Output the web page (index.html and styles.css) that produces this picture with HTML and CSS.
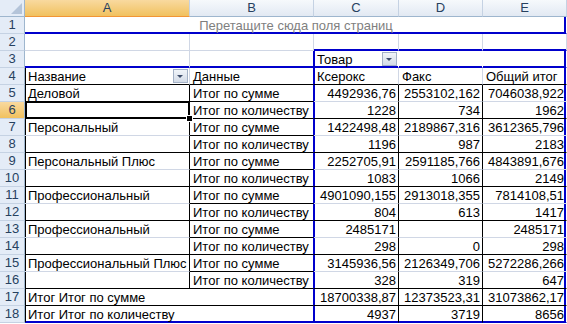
FILE: index.html
```html
<!DOCTYPE html>
<html>
<head>
<meta charset="utf-8">
<link rel="stylesheet" href="styles.css">
</head>
<body>
<div class="sheet">
  <div class="corner"><span class="tri"></span></div>
  <div class="ch sel">A</div>
  <div class="ch">B</div>
  <div class="ch">C</div>
  <div class="ch">D</div>
  <div class="ch">E</div>

  <div class="rh">1</div>
  <div class="c page bB re">Перетащите сюда поля страниц</div>

  <div class="rh">2</div>
  <div class="c"></div><div class="c"></div><div class="c bB"></div><div class="c bB"></div><div class="c bB"></div>

  <div class="rh">3</div>
  <div class="c bB"></div>
  <div class="c bB rb"></div>
  <div class="c bB lb nr fld">Товар<span class="dd"></span></div>
  <div class="c bB nr"></div>
  <div class="c bB re"></div>

  <div class="rh">4</div>
  <div class="c kb lk fld">Название<span class="dd"></span></div>
  <div class="c kb rb">Данные</div>
  <div class="c kb lb">Ксерокс</div>
  <div class="c kb">Факс</div>
  <div class="c kb re">Общий итог</div>

  <div class="rh">5</div>
  <div class="c kr lk">Деловой</div>
  <div class="c kb rb">Итог по сумме</div>
  <div class="c n lb kr">4492936,76</div>
  <div class="c n kr">2553102,162</div>
  <div class="c n re">7046038,922</div>

  <div class="rh sel">6</div>
  <div class="c kb kr lk active"><span class="handle"></span></div>
  <div class="c kb rb">Итог по количеству</div>
  <div class="c n lb kr kb">1228</div>
  <div class="c n kr kb">734</div>
  <div class="c n re kb">1962</div>

  <div class="rh">7</div>
  <div class="c kr lk">Персональный</div>
  <div class="c kb rb">Итог по сумме</div>
  <div class="c n lb kr">1422498,48</div>
  <div class="c n kr">2189867,316</div>
  <div class="c n re">3612365,796</div>

  <div class="rh">8</div>
  <div class="c kb kr lk"></div>
  <div class="c kb rb">Итог по количеству</div>
  <div class="c n lb kr kb">1196</div>
  <div class="c n kr kb">987</div>
  <div class="c n re kb">2183</div>

  <div class="rh">9</div>
  <div class="c kr lk">Персональный Плюс</div>
  <div class="c kb rb">Итог по сумме</div>
  <div class="c n lb kr">2252705,91</div>
  <div class="c n kr">2591185,766</div>
  <div class="c n re">4843891,676</div>

  <div class="rh">10</div>
  <div class="c kb kr lk"></div>
  <div class="c kb rb">Итог по количеству</div>
  <div class="c n lb kr kb">1083</div>
  <div class="c n kr kb">1066</div>
  <div class="c n re kb">2149</div>

  <div class="rh">11</div>
  <div class="c kr lk">Профессиональный</div>
  <div class="c kb rb">Итог по сумме</div>
  <div class="c n lb kr">4901090,155</div>
  <div class="c n kr">2913018,355</div>
  <div class="c n re">7814108,51</div>

  <div class="rh">12</div>
  <div class="c kb kr lk"></div>
  <div class="c kb rb">Итог по количеству</div>
  <div class="c n lb kr kb">804</div>
  <div class="c n kr kb">613</div>
  <div class="c n re kb">1417</div>

  <div class="rh">13</div>
  <div class="c kr lk">Профессиональный</div>
  <div class="c kb rb">Итог по сумме</div>
  <div class="c n lb kr">2485171</div>
  <div class="c n kr"></div>
  <div class="c n re">2485171</div>

  <div class="rh">14</div>
  <div class="c kb kr lk"></div>
  <div class="c kb rb">Итог по количеству</div>
  <div class="c n lb kr kb">298</div>
  <div class="c n kr kb">0</div>
  <div class="c n re kb">298</div>

  <div class="rh">15</div>
  <div class="c kr lk">Профессиональный Плюс</div>
  <div class="c kb rb">Итог по сумме</div>
  <div class="c n lb kr">3145936,56</div>
  <div class="c n kr">2126349,706</div>
  <div class="c n re">5272286,266</div>

  <div class="rh">16</div>
  <div class="c kb kr lk"></div>
  <div class="c kb rb">Итог по количеству</div>
  <div class="c n lb kr kb">328</div>
  <div class="c n kr kb">319</div>
  <div class="c n re kb">647</div>

  <div class="rh">17</div>
  <div class="c span2 kb rb lk">Итог Итог по сумме</div>
  <div class="c n lb kr kb">18700338,87</div>
  <div class="c n kr kb">12373523,31</div>
  <div class="c n re kb">31073862,17</div>

  <div class="rh">18</div>
  <div class="c span2 bB rb lk">Итог Итог по количеству</div>
  <div class="c n lb kr bB">4937</div>
  <div class="c n kr bB">3719</div>
  <div class="c n re bB">8656</div>
</div>
</body>
</html>
```

FILE: styles.css
```css
html, body {
  margin: 0;
  padding: 0;
  background: #ffffff;
}
.sheet {
  display: grid;
  grid-template-columns: 25px 165px 124px 85px 84px 84px;
  grid-auto-rows: 17px;
  width: 567px;
  font-family: "Liberation Sans", Arial, sans-serif;
  font-size: 13px;
  color: #000;
}
.corner {
  background: #e4ecf7;
  border-right: 1px solid #9eb6ce;
  border-bottom: 1px solid #9eb6ce;
  box-sizing: border-box;
  position: relative;
}
.tri {
  position: absolute;
  right: 2px;
  bottom: 2px;
  width: 0;
  height: 0;
  border-left: 11px solid transparent;
  border-bottom: 11px solid #b4c4d9;
}
.ch {
  background: linear-gradient(#f6f9fc, #e2e9f3);
  border-right: 1px solid #c5d2e3;
  border-bottom: 1px solid #9eb6ce;
  box-sizing: border-box;
  text-align: center;
  line-height: 16px;
  font-size: 13px;
  color: #27415f;
}
.ch.sel {
  background: linear-gradient(#f9d99f, #f1c15f);
  border-bottom-color: #f29536;
}
.rh {
  background: #e4ecf7;
  border-right: 1px solid #9eb6ce;
  border-bottom: 1px solid #c5d2e3;
  box-sizing: border-box;
  text-align: center;
  line-height: 16px;
  font-size: 13px;
  color: #27415f;
}
.rh.sel {
  background: linear-gradient(#f9d99f, #f1c15f);
}
.c {
  --sl: 0 0 0 transparent;
  --sr: 0 0 0 transparent;
  --sb: 0 0 0 transparent;
  border-right: 1px solid #d0d7e5;
  border-bottom: 1px solid #d0d7e5;
  box-shadow: var(--sl), var(--sr), var(--sb);
  box-sizing: border-box;
  line-height: 16px;
  padding: 1px 2px 0 3px;
  white-space: nowrap;
  position: relative;
}
.n { text-align: right; }
.page {
  grid-column: span 5;
  text-align: center;
  color: #7f7f7f;
}
.span2 { grid-column: span 2; }
.kb { border-bottom-color: #000; }
.kr { border-right-color: #000; }
.nr { border-right-color: transparent; }
.lk { --sl: inset 1px 0 0 #000; }
.lb { --sl: inset 1px 0 0 #0000cc; }
.rb { border-right-color: #0000cc; }
.re { border-right-color: transparent; --sr: inset -2px 0 0 #0000cc; }
.bB { border-bottom-color: #0000cc; --sb: inset 0 -1px 0 #0000cc; }
.fld .dd {
  position: absolute;
  right: 1px;
  top: 1px;
  width: 15px;
  height: 14px;
  box-sizing: border-box;
  border: 1px solid #a3b1c6;
  background: linear-gradient(#f0f4f9, #d3dbe7);
}
.fld .dd::after {
  content: "";
  position: absolute;
  left: 3px;
  top: 5px;
  border-left: 3px solid transparent;
  border-right: 3px solid transparent;
  border-top: 3px solid #3d4d6a;
}
.active::before {
  content: "";
  position: absolute;
  left: 0;
  right: -1px;
  top: -1px;
  bottom: -1px;
  border: 2px solid #000;
  z-index: 2;
}
.active { z-index: 2; }
.handle {
  position: absolute;
  right: -4px;
  bottom: -4px;
  width: 5px;
  height: 5px;
  background: #000;
  border: 1px solid #fff;
  z-index: 3;
}
```
